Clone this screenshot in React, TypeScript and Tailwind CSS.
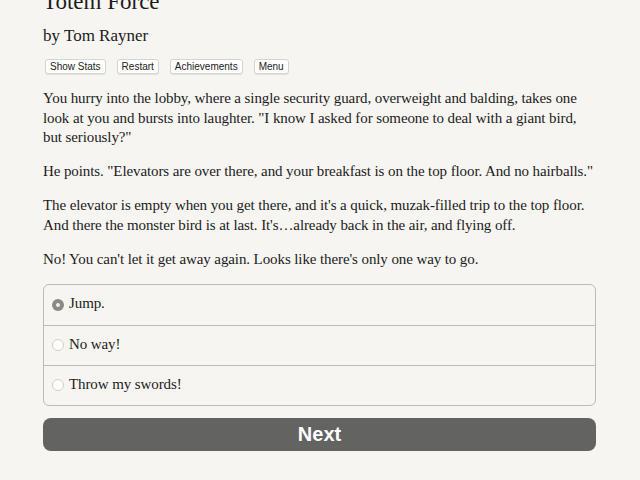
const buttons = ["Show Stats", "Restart", "Achievements", "Menu"];

const paragraphs = [
  "You hurry into the lobby, where a single security guard, overweight and balding, takes one look at you and bursts into laughter. \"I know I asked for someone to deal with a giant bird, but seriously?\"",
  "He points. \"Elevators are over there, and your breakfast is on the top floor. And no hairballs.\"",
  "The elevator is empty when you get there, and it's a quick, muzak-filled trip to the top floor. And there the monster bird is at last. It's\u2026already back in the air, and flying off.",
  "No! You can't let it get away again. Looks like there's only one way to go.",
];

const choices = ["Jump.", "No way!", "Throw my swords!"];

export default function App() {
  return (
    <div className="flex h-[480px] flex-col overflow-hidden bg-[#f7f5f2] text-[#1c1c1c] font-['Liberation_Serif',serif]">
      <div className="mx-[43px] w-[553px] -mt-[12px]">
        <h1 className="text-[23px] leading-[28px]">Totem Force</h1>
        <h2 className="mt-[9px] text-[17px] leading-[22px]">by Tom Rayner</h2>
        <div className="mt-[12px] flex gap-[11px] pl-[2px]">
          {buttons.map((b) => (
            <button
              key={b}
              className="h-[15px] rounded-[3px] border border-[#d6d4d0] bg-white px-[4px] text-[10px] leading-[13px] text-[#222] font-['Liberation_Sans',sans-serif] shadow-[0_1px_1px_rgba(0,0,0,0.08)]"
            >
              {b}
            </button>
          ))}
        </div>
        <div className="mt-[15px] text-[15px] leading-[19.5px] tracking-[-0.1px]">
          {paragraphs.map((p, i) => (
            <p key={i} className="mb-[14.5px]">
              {p}
            </p>
          ))}
        </div>
        <div className="mt-[8px] rounded-[6px] border border-[#bdbbb8] text-[15px] tracking-[-0.1px]">
          {choices.map((c, i) => (
            <label
              key={c}
              className={`flex h-[40px] items-center gap-[5px] pl-[8px] ${i > 0 ? "border-t border-[#bdbbb8]" : ""}`}
            >
              <span
                className={`flex size-[12px] items-center justify-center rounded-full ${
                  i === 0 ? "bg-[#8a8987]" : "border border-[#d2d0cc] bg-white"
                }`}
              >
                {i === 0 && <span className="size-[4px] rounded-full bg-[#eeeeec]" />}
              </span>
              <span className="mb-[2px]">{c}</span>
            </label>
          ))}
        </div>
        <button className="mt-[12px] h-[33px] w-full rounded-[8px] bg-[#636361] text-[20px] font-bold text-white font-['Liberation_Sans',sans-serif]">
          Next
        </button>
      </div>
    </div>
  );
}
